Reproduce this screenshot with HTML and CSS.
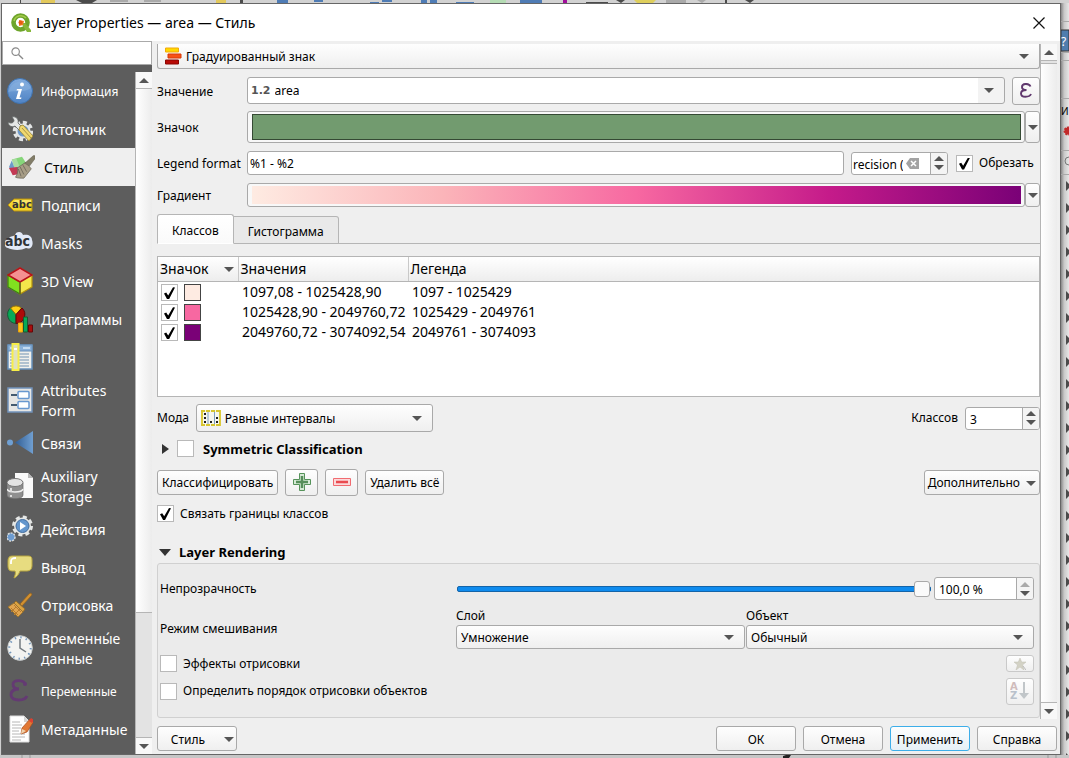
FILE: index.html
```html
<!DOCTYPE html>
<html lang="ru">
<head>
<meta charset="utf-8">
<title>Layer Properties — area — Стиль</title>
<link rel="stylesheet" href="styles.css">
</head>
<body>
<div class="desktop">
  <svg class="toolbar-edge" viewBox="0 0 1069 3" preserveAspectRatio="xMinYMin slice" aria-hidden="true">
    <rect width="1069" height="3" fill="#d2d2d2"/>
    <path d="M41 0h14v3H41zM216 0h10v3h-10z" fill="#e3c95c"/>
    <path d="M277 0h11v3h-11zM314 0h9v2h-9zM370 2h9v1h-9zM382 0h10v2h-10zM421 0h6v3h-6zM430 0h7v3h-7zM456 2h18v1h-18zM520 0h22v3h-22z" fill="#4f7cb5"/>
    <path d="M490 0h16v3h-16z" fill="#b5dcb4"/>
    <path d="M563 0h4v3h-4z" fill="#a10d9b"/>
    <path d="M586 2h22v1h-22zM616 0h9l-4 3zM745 0h9l-4 3zM725 0h2v3h-2zM20 0h1v3h-1zM76 0l6 3h10l5-3M208 0v3M240 0h3v3h-3z" fill="#4b4b4b"/>
    <path d="M634 0h22l-3 3h-16z" fill="#dfcf5d"/>
    <path d="M666 0h20v3h-20zM697 0h9l-4 3zM110 0h18v2h-18zM144 0h17v2h-17z" fill="#aaa"/>
  </svg>

  <section class="dialog" role="dialog" aria-label="Layer Properties — area — Стиль">
    <header class="titlebar">
      <svg class="logo" viewBox="0 0 20 20" aria-hidden="true">
        <circle cx="9.500" cy="9.500" r="7" fill="none" stroke="#6ea52b" stroke-width="4.600"/>
        <path d="M3 8a7 7 0 0 1 12-3" fill="none" stroke="#a7cc4d" stroke-width="1.500"/>
        <path d="M10 10l4 0 6 7v2h-4z" fill="#86b73a"/>
        <path d="M8 7l5 1-1 4-4 1z" fill="#ef7c22"/><circle cx="9.500" cy="9.500" r="2" fill="#e65b13"/>
      </svg>
      <h1 class="title">Layer Properties — area — Стиль</h1>
      <button class="close" type="button" aria-label="Закрыть"><svg viewBox="0 0 12 12"><path d="M0.500.500l11 11M11.500.500l-11 11" stroke="#111" stroke-width="1.200"/></svg></button>
    </header>

    <div class="body">
      <aside class="sidebar">
        <label class="search">
          <svg viewBox="0 0 14 14" aria-hidden="true"><circle cx="5" cy="5" r="4" fill="none" stroke="#888" stroke-width="1.200"/><path d="M8 8l5 5" stroke="#888" stroke-width="1.400"/></svg>
          <input type="text" aria-label="Поиск">
        </label>
        <div class="nav-wrap">
          <nav class="nav">
            <a href="#info" class="item small"><svg viewBox="0 0 26 26"><defs><linearGradient id="gi" x2="0" y2="1"><stop stop-color="#82acdf"/><stop offset="1" stop-color="#4f83c4"/></linearGradient></defs><circle cx="13" cy="13" r="12.500" fill="url(#gi)" stroke="#3f73b0"/><path d="M1.500 14C7 12 18 15 24 10A12 12 0 0 0 1.500 14" fill="#8cb3df" opacity=".5"/><circle cx="15" cy="6.500" r="2" fill="#fff"/><path d="M10 11h5l-2.500 8.500h2l-.5 1.500h-5l2.500-8.500h-2z" fill="#fff"/></svg><span>Информация</span></a>
            <a href="#source" class="item"><svg viewBox="0 0 26 26"><circle cx="16" cy="15" r="8.500" fill="none" stroke="#e3e5e5" stroke-width="3.500" stroke-dasharray="4 2.600"/><circle cx="16" cy="15" r="7.500" fill="#e3e5e5"/><circle cx="16" cy="15" r="5.500" fill="#6e9acb"/><path d="M1 6c3 2 6 1 6-2L5 1c4-1 7 2 6 6l5 5-3 3-5-5C4 12 1 9 1 6z" fill="#e5e7e6" stroke="#5f6464" stroke-width=".8"/><path d="M13 10l3-1 10 11-4 5-10-11z" fill="#f0d86f" stroke="#9b8532" stroke-width=".8"/><path d="M15 12l9 10" stroke="#aa9343"/></svg><span>Источник</span></a>
            <a href="#style" class="item current" aria-current="page"><svg viewBox="0 0 28 26"><path d="M3 5l11-3 6 9-11 4z" fill="#86d67a"/><path d="M3 5l5-1 4 10-6 1z" fill="#a9dca0"/><path d="M3 6l3 8 8-2 2 4-13 2-3-5z" fill="#6b9bc8"/><path d="M0 14l9-1 5 7-10 2z" fill="#c33a54"/><path d="M9 14l9-6 6 7-8 10c-4 0-7 0-9-1 2-3 3-6 2-10z" fill="#a79d86" stroke="#6b6659" stroke-width=".8"/><path d="M17 9l9-8c2-1 3 1 2 3l-6 8z" fill="#827d68" stroke="#66614f" stroke-width=".6"/><path d="M10 15l3 8M12 13l4 8M15 11l4 7" stroke="#706a5d"/></svg><span>Стиль</span></a>
            <a href="#labels" class="item"><svg viewBox="0 0 26 26"><path d="M1 13l6-6h18v12H7z" fill="#f3d62c" stroke="#b68e12"/><path d="M8 8h16v4H6z" fill="#fbe766"/><text x="5" y="16" class="abc-label">abc</text></svg><span>Подписи</span></a>
            <a href="#masks" class="item"><svg class="wide" viewBox="0 0 28 28"><path d="M4 9c3-3 6-1 7-5 3-2 6-1 7 2 5-1 9 1 9 5 2 5-1 10-6 8-5 3-15 2-18 0-5-1-4-9 1-10z" fill="#e2e9f7"/><text x="0" y="17" class="abc-mask">abc</text></svg><span>Masks</span></a>
            <a href="#3d" class="item"><svg viewBox="0 0 26 28"><path d="M13 1l12 7v12l-12 7-12-7V8z" fill="#f4e64b" stroke="#b4920d" stroke-width="1.200"/><path d="M1 8l12 7v12l-12-7z" fill="#81e01f" stroke="#35811a" stroke-width="1.200"/><path d="M13 1l12 7-12 7L1 8z" fill="#f49191" stroke="#b5121b" stroke-width="1.600"/><path d="M13 15v12" stroke="#74621b" stroke-width="1.500"/></svg><span>3D View</span></a>
            <a href="#diagrams" class="item"><svg viewBox="0 0 26 27"><path d="M9 9L4 2a9 9 0 0 0 5 16z" fill="#08a957" stroke="#185a35"/><path d="M9 9L3.500 2.500a9 9 0 0 1 11 0z" fill="#ffd016" stroke="#967409"/><path d="M9 9l6-6.500A9 9 0 0 1 9 18z" fill="#ad0a0a" stroke="#5f0909"/><path d="M11.500 17.500h4v9h-4z" fill="#ffc31b" stroke="#eba30b"/><path d="M16.500 11.500h4v15h-4z" fill="#08a957" stroke="#165b31"/><path d="M21.500 19.500h4v7h-4z" fill="#a80d0d" stroke="#670606"/></svg><span>Диаграммы</span></a>
            <a href="#fields" class="item"><svg viewBox="0 0 26 28"><path d="M1 2h24v24H1z" fill="#f0f0ec" stroke="#6891bb" stroke-width="1.500"/><path d="M1 2h24v6H1z" fill="#8bb2da" stroke="#6891bb"/><path d="M16 4h7v2h-7zM3 4h2v2H3z" fill="#c4dbf1"/><path d="M3 11h19M3 14h19M3 17h19M3 20h19M3 23h19" stroke="#7193b3"/><path d="M5.500 1h6v26h-6z" fill="#dfe1bc" stroke="#f7ee48" stroke-width="2"/><path d="M7 5h3v2H7z" fill="#fff"/></svg><span>Поля</span></a>
            <a href="#form" class="item double"><svg viewBox="0 0 26 26"><path d="M1 1h24v24H1z" fill="#e6e6e4" stroke="#7292ba" stroke-width="1.500"/><path d="M4 8h6M4 18h6" stroke="#445b70" stroke-width="2"/><rect x="11" y="4.500" width="11" height="7" rx="1" fill="#fff" stroke="#6898cf" stroke-width="1.500"/><rect x="11" y="14.500" width="11" height="7" rx="1" fill="#fff" stroke="#6898cf" stroke-width="1.500"/></svg><span>Attributes Form</span></a>
            <a href="#joins" class="item"><svg viewBox="0 0 26 26"><defs><linearGradient id="gj"><stop stop-color="#315e95"/><stop offset="1" stop-color="#709fd1"/></linearGradient></defs><circle cx="3" cy="12.500" r="3" fill="#70a0d3"/><path d="M8 12.500L26 1v23z" fill="url(#gj)"/></svg><span>Связи</span></a>
            <a href="#storage" class="item double"><svg viewBox="0 0 26 28"><path d="M8 1h13l5 5v20H8z" fill="#fafafa"/><path d="M21 1v5h5z" fill="#bbb"/><path d="M0 11v12c0 5 16 5 16 0V11z" fill="#8f8f8f" stroke="#656565" stroke-width=".7"/><ellipse cx="8" cy="10.500" rx="8" ry="4" fill="#e3e3e3" stroke="#777"/><path d="M0 17c1 4 15 4 16 0" fill="none" stroke="#eee" stroke-width="1.500"/><path d="M4 16v4M4 23v2" stroke="#ddd" stroke-width="2"/></svg><span>Auxiliary Storage</span></a>
            <a href="#actions" class="item"><svg viewBox="0 0 26 28"><circle cx="15.500" cy="11" r="9" fill="none" stroke="#e5e7e6" stroke-width="3" stroke-dasharray="4 3.070"/><circle cx="15.500" cy="11" r="8.500" fill="#e5e7e6"/><circle cx="15.500" cy="11" r="6.500" fill="#6396cd" stroke="#426d9f"/><path d="M13 7v8l6-4z" fill="#fff"/><circle cx="4" cy="22" r="4" fill="#6c9bd0" stroke="#d7dada" stroke-width="1.500" stroke-dasharray="2 1"/></svg><span>Действия</span></a>
            <a href="#display" class="item"><svg viewBox="0 0 26 26"><path d="M5 2h16c3 0 4 1 4 4v6c0 3-2 5-5 5h-7c-1 3-3 6-6 7 1-3 2-5 1-7H5c-3 0-4-2-4-5V7c0-3 1-5 4-5z" fill="#e7dc80" stroke="#b7a540"/><path d="M4 10V8c0-3 1-4 5-4" fill="none" stroke="#fff" stroke-width="1.800"/></svg><span>Вывод</span></a>
            <a href="#rendering" class="item"><svg viewBox="0 0 26 26"><path d="M13 12L22 2c2-2 4 0 2 2l-9 10z" fill="#d19031" stroke="#92601d" stroke-width=".7"/><path d="M9 9l9 8-2 3-9-9z" fill="#dba240" stroke="#926b2b"/><path d="M7 11l9 9-5 5L1 15z" fill="#e1a54f" stroke="#997432"/><path d="M4 16l7 7M7 13l7 7M4 20l5-5M7 23l6-6" stroke="#b87c2f"/></svg><span>Отрисовка</span></a>
            <a href="#temporal" class="item double"><svg viewBox="0 0 26 26"><circle cx="13" cy="13" r="12.300" fill="#f3f3f1" stroke="#cbd0d1"/><circle cx="13" cy="13" r="10.700" fill="none" stroke="#7497bc" stroke-width="2" stroke-dasharray="1.400 4.200"/><path d="M13 4v9l6 4" fill="none" stroke="#747b80" stroke-width="1.500"/></svg><span>Временны́е данные</span></a>
            <a href="#variables" class="item small"><svg viewBox="0 0 26 26"><path d="M18 6c-1-4-11-5-12 0 0 3 2 5 6 5-5 0-8 2-8 6 1 7 14 6 16 1" fill="none" stroke="#643a73" stroke-width="2.800"/><circle cx="18" cy="6" r="2" fill="#643a73"/></svg><span>Переменные</span></a>
            <a href="#metadata" class="item"><svg viewBox="0 0 26 28"><path d="M3 1h14l5 5v21H3z" fill="#fff" stroke="#ddd"/><path d="M17 1v6h5z" fill="#d4d4d4"/><path d="M5 7h8M5 10h10M5 13h9M5 16h7M5 19h13M5 22h13M5 25h9" stroke="#b6b6b6"/><path d="M15 13l8-9 4 2-7 11-6 2z" fill="#e17835" stroke="#a94c1b" stroke-width=".7"/><path d="M22 6l2-3 3 2-2 3z" fill="#db4132"/><path d="M14 19l1-5 4 2z" fill="#efd2ad"/></svg><span>Метаданные</span></a>
          </nav>
          <div class="scroll nav-scroll" aria-hidden="true"><i class="cap up"></i><i class="thumb"></i><i class="rest"></i><i class="cap down"></i></div>
        </div>
      </aside>

      <main class="content">
        <div class="viewport">
          <form class="form" id="styleform">
            <div class="combo renderer">
              <svg viewBox="0 0 18 18" aria-hidden="true"><path d="M1.500 1h13v4h-13z" fill="#ffd900" stroke="#f3aa0b"/><path d="M4 7h13v4H4z" fill="#f75216" stroke="#d83a06"/><path d="M1.500 13h13v4h-13z" fill="#b90b06" stroke="#8c0702"/></svg>
              <select aria-label="Тип знака"><option>Градуированный знак</option></select>
            </div>

            <div class="line value-line">
              <label class="name" for="value">Значение</label>
              <div class="combo field"><b class="type">1.2</b><select id="value"><option>area</option></select></div>
              <button class="btn eps" type="button" aria-label="Выражение"><svg viewBox="0 0 12 15"><path d="M10.500 3.500C9 0 2 0 2 4c0 2 2 3 4.500 3C3 7 1 8.500 1 10.500 1 15 9.500 14.500 11 11" fill="none" stroke="#60386e" stroke-width="1.900"/></svg></button>
            </div>

            <div class="line tall">
              <span class="name">Значок</span>
              <button class="swatch symbol" type="button" aria-label="Значок"><i></i></button>
              <button class="drop" type="button" aria-label="Меню значка"></button>
            </div>

            <div class="line">
              <label class="name" for="legend">Legend format</label>
              <input class="text" id="legend" type="text" value="%1 - %2">
              <div class="spin precision"><input type="text" aria-label="Precision" value="recision (">
                <button class="clear" type="button" aria-label="Очистить"><svg viewBox="0 0 13 11"><path d="M0 5.500L4 0h9v11H4z" fill="#a3a3a3"/><path d="M5 3l5 5M10 3L5 8" stroke="#fff" stroke-width="1.500"/></svg></button>
                <span class="steps"><button type="button" aria-label="Больше"></button><button type="button" aria-label="Меньше"></button></span></div>
              <label class="check"><input type="checkbox" checked>Обрезать</label>
            </div>

            <div class="line">
              <span class="name">Градиент</span>
              <button class="swatch ramp" type="button" aria-label="Градиент"><i></i></button>
              <button class="drop" type="button" aria-label="Меню градиента"></button>
            </div>

            <div class="tabs" role="tablist">
              <button class="tab on" type="button" role="tab" aria-selected="true">Классов</button>
              <button class="tab" type="button" role="tab">Гистограмма</button>
            </div>

            <div class="tree">
              <table>
                <thead><tr><th class="c1">Значок<i class="sort"></i></th><th class="c2">Значения</th><th>Легенда</th></tr></thead>
                <tbody>
                  <tr><td><input type="checkbox" checked aria-label="Класс 1"><i class="chip pale"></i></td><td>1097,08 - 1025428,90</td><td>1097 - 1025429</td></tr>
                  <tr><td><input type="checkbox" checked aria-label="Класс 2"><i class="chip pink"></i></td><td>1025428,90 - 2049760,72</td><td>1025429 - 2049761</td></tr>
                  <tr><td><input type="checkbox" checked aria-label="Класс 3"><i class="chip plum"></i></td><td>2049760,72 - 3074092,54</td><td>2049761 - 3074093</td></tr>
                </tbody>
              </table>
            </div>

            <div class="mode">
              <label for="mode">Мода</label>
              <div class="combo mode-combo">
                <svg viewBox="0 0 20 16" aria-hidden="true"><path d="M0 0h20v16H0z" fill="#f7f7ee"/><path d="M7 0v16M13.500 0v16" stroke="#7ea0c4"/><path d="M1 0v16M19 0v16" stroke="#dccb3c" stroke-width="2"/><path d="M0 1h20M0 15h20" stroke="#d7c52f" stroke-width="2" stroke-dasharray="4 1"/><path d="M3 3h2v2H3zM3 7h2v2H3zM3 11h2v2H3zM9 11h2v2H9zM15 7h2v2h-2zM15 11h2v2h-2z" fill="#222"/></svg>
                <select id="mode"><option>Равные интервалы</option></select>
              </div>
              <label class="push" for="classes">Классов</label>
              <div class="spin classes"><input id="classes" type="text" value="3"><span class="steps"><button type="button" aria-label="Больше"></button><button type="button" aria-label="Меньше"></button></span></div>
            </div>

            <div class="group-title symmetric"><i class="fold"></i><label class="check"><input type="checkbox">Symmetric Classification</label></div>

            <div class="actions">
              <button class="btn" type="button">Классифицировать</button>
              <button class="btn icon" type="button" aria-label="Добавить класс"><svg viewBox="0 0 18 18"><path d="M6.500.500h5v6h6v5h-6v6h-5v-6h-6v-5h6z" fill="#d5e9d5" stroke="#56935a"/><path d="M9 3v12M3 9h12" stroke="#568e5a" stroke-width="2.500"/></svg></button>
              <button class="btn icon" type="button" aria-label="Удалить класс"><svg viewBox="0 0 18 18"><path d="M.500 5.500h17v7H.500z" fill="#fbd9da" stroke="#f16b70"/><path d="M3 9h12" stroke="#e94b50" stroke-width="2.500"/></svg></button>
              <button class="btn" type="button">Удалить всё</button>
              <button class="btn menu push" type="button">Дополнительно<i class="tri"></i></button>
            </div>

            <label class="check link"><input type="checkbox" checked>Связать границы классов</label>

            <div class="group-title rendering"><i class="fold open"></i>Layer Rendering</div>
            <div class="group">
              <div class="opacity">
                <label for="opacity">Непрозрачность</label>
                <input class="slider" id="opacity" type="range" value="100">
                <div class="spin percent"><input type="text" aria-label="Непрозрачность, проценты" value="100,0 %"><span class="steps"><button type="button" disabled aria-label="Больше"></button><button type="button" aria-label="Меньше"></button></span></div>
              </div>
              <div class="blend">
                <span>Режим смешивания</span>
                <div><label for="layer">Слой</label><div class="combo"><select id="layer"><option>Умножение</option></select></div></div>
                <div><label for="object">Объект</label><div class="combo"><select id="object"><option>Обычный</option></select></div></div>
              </div>
              <div class="option"><label class="check"><input type="checkbox">Эффекты отрисовки</label>
                <button class="btn off" type="button" disabled aria-label="Настроить эффекты"><svg viewBox="0 0 12 12"><path d="M6 0l1.700 4H12L8.500 7l1.500 5-4-3-4 3 1.500-5L0 4h4.300z" fill="#d3d2c5" stroke="#c2c1b4" stroke-width=".5"/><path d="M9 8l3 4" stroke="#bbb"/></svg></button></div>
              <div class="option order"><label class="check"><input type="checkbox">Определить порядок отрисовки объектов</label>
                <button class="btn off" type="button" disabled aria-label="Порядок отрисовки"><svg viewBox="0 0 20 20"><text x="0" y="9" class="az-a">A</text><text x="0" y="18" class="az-z">Z</text><path d="M14 1v13" stroke="#c1c6c9" stroke-width="2"/><path d="M9 12h10l-5 6z" fill="#c1c6c9"/></svg></button></div>
            </div>
          </form>
          <div class="scroll main-scroll" aria-hidden="true"><i class="cap up"></i><i class="rest"></i><i class="thumb"></i><i class="cap down"></i></div>
        </div>

        <footer class="footer">
          <button class="btn menu style-menu" type="button">Стиль<i class="tri"></i></button>
          <button class="btn push" type="button">ОК</button>
          <button class="btn" type="button">Отмена</button>
          <button class="btn primary" type="submit" form="styleform">Применить</button>
          <button class="btn" type="button">Справка</button>
        </footer>
      </main>
    </div>
  </section>

  <svg class="panel-edge" viewBox="0 0 8 755" preserveAspectRatio="xMinYMin slice" aria-hidden="true">
    <defs>
      <linearGradient id="shade"><stop stop-color="#888"/><stop offset=".4" stop-color="#c9c9c9"/><stop offset="1" stop-color="#e6e6e6"/></linearGradient>
      <pattern id="arrows" width="8" height="22" patternUnits="userSpaceOnUse" y="172"><path d="M5 6l5 5-5 5z" fill="#4b4b4b"/></pattern>
    </defs>
    <rect width="8" height="755" fill="url(#shade)"/>
    <path d="M0 18.500h8M0 49.500h8M0 57.500h8M0 95.500h8M0 147.500h8M0 171.500h8" stroke="#a9a9a9"/>
    <path d="M0 27h8v21H0z" fill="#4f7dae" stroke="#333"/>
    <text x="0" y="43" class="edge-help">?</text>
    <text x="0" y="112" class="edge-text">И</text>
    <circle cx="7" cy="128" r="3.500" fill="#c22a2a" stroke="#c22a2a" stroke-width="2" stroke-dasharray="2 1"/>
    <circle cx="8" cy="158" r="4" fill="none" stroke="#777"/>
    <rect y="172" width="8" height="583" fill="url(#arrows)"/>
  </svg>
  <svg class="bottom-edge" viewBox="0 0 1069 3" preserveAspectRatio="xMinYMin slice" aria-hidden="true"><rect width="1069" height="3" fill="#c6c6c6"/><path d="M783 1l3-1h5l-2 3h-6z" fill="#222"/><path d="M22 0v3M30 0v3M1048 0v3M1056 0v3" stroke="#999"/></svg>
</div>
</body>
</html>
```
FILE: styles.css
```css
* { box-sizing: border-box; }

body {
  margin: 0;
  background: #cfcfcf;
  color: #000;
  font: 12px/16px "Noto Sans", "Open Sans", sans-serif;
}

button, input, select { font: inherit; color: inherit; margin: 0; }
button { cursor: default; }
i { font-style: normal; }
svg { display: block; flex: none; }

.desktop {
  display: grid;
  grid-template: 3px minmax(0, 1fr) 3px / 1px minmax(0, 1fr) 8px;
  height: 100vh;
  overflow: hidden;
}
.toolbar-edge, .bottom-edge { grid-column: 1 / -1; width: 100%; height: 3px; }
.panel-edge { grid-column: 3; grid-row: 2; width: 8px; height: 100%; }

.dialog {
  grid-column: 2;
  display: flex;
  flex-direction: column;
  min-height: 0;
  border: 1px solid #666;
  background: #efefef;
}

.titlebar {
  display: flex;
  align-items: center;
  flex: none;
  height: 37px;
  padding: 0 14px 0 9px;
  background: #fff;
}
.logo { width: 20px; height: 20px; }
.title { flex: 1; margin: 0 0 0 5px; font-size: 14px; font-weight: 400; line-height: 20px; }
.close { width: 14px; height: 14px; padding: 1px; border: 0; background: none; }

.body { display: flex; flex: 1; min-height: 0; }

/* Sidebar */
.sidebar { display: flex; flex-direction: column; flex: none; width: 150px; background: #5d5d5d; }
.search {
  display: flex;
  align-items: center;
  flex: none;
  height: 24px;
  padding-left: 8px;
  background: #fff;
  border: 1px solid #aaa;
}
.search svg { width: 13px; height: 13px; }
.search input { flex: 1; min-width: 0; border: 0; outline: 0; background: none; }
.nav-wrap { display: flex; flex: 1; min-height: 0; margin-top: 7px; }
.nav { flex: 1; overflow: hidden; }
.item {
  display: flex;
  align-items: center;
  gap: 8px;
  height: 38px;
  padding-left: 5px;
  color: #fff;
  font-size: 14px;
  line-height: 20px;
  text-decoration: none;
}
.item svg { width: 26px; height: 28px; }
.item svg.wide { width: 28px; margin: 0 0 0 -2px; }
.item span { width: 92px; padding-top: 2px; }
.item.small { font-size: 12px; }
.item.double { height: 48px; }
.item.current { gap: 9px; padding-left: 7px; background: #efefef; color: #000; }
.abc-label { font: bold 10px "DejaVu Sans", sans-serif; fill: #333; }
.abc-mask { font: bold 14px "DejaVu Sans Condensed", "DejaVu Sans", sans-serif; fill: #2f3338; }

/* Scroll bars */
.scroll { display: flex; flex-direction: column; flex: none; width: 17px; border-left: 1px solid #b5b5b5; background: #e3e3e3; }
.scroll i { display: block; }
.scroll .cap { display: flex; align-items: center; justify-content: center; height: 17px; background: #f8f8f8; border: solid #b5b5b5; border-width: 0 0 1px; }
.scroll .cap.down { border-width: 1px 0 0; }
.cap::before { content: ""; border: 5px solid transparent; border-top-width: 0; border-bottom-color: #555; }
.cap.down::before { border-width: 5px 5px 0; border-top-color: #555; }
.thumb { background: linear-gradient(90deg, #fff, #ececec); }
.nav-scroll .thumb { flex: 525; border-bottom: 1px solid #b5b5b5; }
.nav-scroll .rest { flex: 124; }
.main-scroll .rest { height: 3px; border-bottom: 1px solid #b5b5b5; }
.main-scroll .thumb { flex: 1; }

/* Content column */
.content { display: flex; flex-direction: column; flex: 1; min-width: 0; padding: 3px 3px 3px 5px; }
.viewport { display: flex; flex: 1; min-height: 0; }
.form { flex: 1; min-width: 0; overflow: hidden; }

.combo {
  position: relative;
  display: flex;
  align-items: center;
  height: 24px;
  border: 1px solid #a9a9a9;
  border-radius: 3px;
  background: linear-gradient(#fefefe, #efefef);
}
.combo select {
  flex: 1;
  min-width: 0;
  height: 100%;
  padding: 1px 24px 0 4px;
  border: 0;
  outline: 0;
  background: none;
  appearance: none;
}
.combo::after {
  content: "";
  position: absolute;
  right: 10px;
  border: 5px solid transparent;
  border-bottom: 0;
  border-top-color: #555;
  pointer-events: none;
}
.renderer { height: 25px; border-top: 0; border-radius: 0 0 3px 3px; }
.renderer svg { width: 18px; height: 18px; margin-left: 6px; }

.line { display: flex; align-items: center; height: 24px; margin-top: 8px; }
.line.value-line { height: 27px; }
.line.tall { height: 32px; margin-top: 7px; }
.line .name { flex: none; width: 90px; padding-top: 2px; }
.line .field {
  flex: 1;
  height: 27px;
  margin: 0 7px 0 0;
  background: linear-gradient(90deg, #fff, #fff) left / calc(100% - 26px) 100% no-repeat, #f3f3f3;
}
.type { padding-left: 3px; color: #555; font-family: "DejaVu Sans", sans-serif; font-size: 11px; }

.btn {
  display: flex;
  align-items: center;
  justify-content: center;
  height: 25px;
  padding: 2px 3px 0;
  border: 1px solid #a9a9a9;
  border-radius: 3px;
  background: linear-gradient(#fefefe, #efefef);
}
.btn.eps { width: 28px; height: 28px; padding: 0; }
.eps svg { width: 12px; height: 15px; }

.swatch {
  display: flex;
  flex: 1;
  height: 100%;
  padding: 2px 3px 2px 4px;
  border: 1px solid #a9a9a9;
  border-radius: 3px;
  background: #f8f8f8;
}
.swatch i { flex: 1; height: 100%; }
.symbol i { border: 1px solid #354a34; background: #729b6f; }
.ramp i { background: linear-gradient(90deg, #feebe2, #fbb4b9 25%, #f768a1 50%, #c51b8a 75%, #7a0177); }
.drop {
  display: flex;
  align-items: center;
  justify-content: center;
  width: 15px;
  height: 100%;
  padding: 0;
  border: 1px solid #a9a9a9;
  border-radius: 3px;
  background: linear-gradient(#fefefe, #efefef);
}
.drop::before, .tri, .sort { content: ""; border: 5px solid transparent; border-bottom: 0; border-top-color: #555; }

.text {
  flex: 1;
  min-width: 0;
  height: 24px;
  margin-right: 7px;
  padding: 1px 2px 0;
  border: 1px solid #a9a9a9;
  border-radius: 3px;
  outline: 0;
  background: #fff;
}
.spin { display: flex; align-items: center; flex: none; height: 23px; border: 1px solid #a9a9a9; border-radius: 3px; background: #fff; overflow: hidden; }
.spin input { flex: 1; min-width: 0; height: 100%; padding: 2px 4px 0; border: 0; outline: 0; background: none; }
.steps { display: flex; flex-direction: column; flex: none; width: 17px; height: 100%; border-left: 1px solid #a9a9a9; background: #f4f4f4; }
.steps button { display: flex; flex: 1; justify-content: center; align-items: flex-end; padding: 0 0 2px; border: 0; background: none; }
.steps button + button { align-items: flex-start; padding: 2px 0 0; }
.steps button::before { content: ""; border: 5px solid transparent; border-top: 0; border-bottom-color: #555; }
.steps button + button::before { border-top: 5px solid #555; border-bottom: 0; }
.steps button:disabled::before { border-bottom-color: #aaa; }
.precision { width: 97px; margin-right: 7px; }
.precision input { padding: 2px 0 0; margin-left: 1px; }
.clear { width: 13px; height: 11px; margin: 0 11px 0 3px; padding: 0; border: 0; background: none; }

.check { display: flex; align-items: center; gap: 6px; }
input[type="checkbox"] {
  appearance: none;
  flex: none;
  display: flex;
  width: 17px;
  height: 17px;
  border: 1px solid #b9b9b9;
  background: #fff;
}
input[type="checkbox"]:checked::before {
  content: "";
  width: 11px;
  height: 12px;
  margin: 2px;
  background: #000;
  clip-path: polygon(0 52%, 20% 44%, 38% 68%, 82% 0, 100% 2%, 46% 100%, 28% 100%);
}
.line .check { width: 84px; margin-left: 1px; }

/* Tabs and class list */
.tabs { display: flex; align-items: flex-end; height: 30px; margin-top: 7px; background: linear-gradient(#b5b5b5, #b5b5b5) bottom / 100% 1px no-repeat; }
.tab { height: 28px; padding: 3px 14px 0; border: 1px solid #b5b5b5; border-left: 0; border-radius: 0 3px 0 0; background: #e9e9e9; }
.tab.on { height: 30px; border-left: 1px solid #b5b5b5; border-bottom-color: #fff; border-radius: 3px 3px 0 0; background: linear-gradient(#fff, #fafafa); }
.tree { min-height: 141px; margin-top: 12px; border: 1px solid #b5b5b5; background: #fff; }
table { width: 100%; border-collapse: collapse; table-layout: fixed; font-size: 14px; line-height: 20px; }
th {
  height: 24px;
  padding: 1px 2px 0;
  border-bottom: 1px solid #b5b5b5;
  background: linear-gradient(#fff, #ededed);
  font-weight: 400;
  text-align: left;
}
th + th { border-left: 1px solid #c9c9c9; }
.c1 { width: 80px; }
.c2 { width: 170px; }
.sort { float: right; margin: 8px 2px 0 0; }
td { height: 20px; padding: 0 0 0 4px; white-space: nowrap; }
td:first-child { padding-left: 3px; }
td > * { vertical-align: middle; }
td input[type="checkbox"] { display: inline-flex; }
.chip { display: inline-block; width: 17px; height: 17px; margin-left: 6px; border: 1px solid #444; }
.pale { background: #feebe2; }
.pink { background: #f768a1; }
.plum { background: #7a0177; }

.mode { display: flex; align-items: center; gap: 7px; margin-top: 7px; }
.mode-combo { width: 237px; height: 28px; }
.mode-combo svg { width: 20px; height: 16px; margin-left: 4px; }
.push { margin-left: auto; }
.classes { width: 75px; }

.group-title { display: flex; align-items: center; gap: 8px; font-size: 13px; font-weight: 700; }
.fold { border: 5px solid transparent; border-left: 7px solid #333; border-right: 0; margin-left: 5px; }
.fold.open { border: 6px solid transparent; border-top: 7px solid #333; border-bottom: 0; margin-left: 2px; }
.symmetric { margin-top: 8px; }
.symmetric .check { gap: 9px; }
.actions { display: flex; align-items: center; gap: 7px; height: 28px; margin-top: 11px; }
.actions .btn { padding: 2px 4px 0; }
.actions .btn.icon { width: 33px; height: 27px; padding: 0; }
.actions .menu { padding: 2px 3px 0; }
.icon svg { width: 18px; height: 18px; }
.menu { gap: 6px; }
.link { margin-top: 9px; }
.rendering { margin-top: 22px; }
.group { margin-top: 3px; min-height: 155px; padding: 13px 5px 12px 2px; border: 1px solid #d0d0d0; border-radius: 3px; background: #ebebeb; }

.opacity { display: grid; grid-template-columns: 296px minmax(0, 1fr) 100px; align-items: center; }
.slider { appearance: none; width: calc(100% - 4px); height: 16px; margin: 0 0 0 1px; background: none; }
.slider::-webkit-slider-runnable-track { height: 6px; border: 1px solid #1464a8; border-radius: 2px; background: #0f8bee; }
.slider::-webkit-slider-thumb { appearance: none; width: 16px; height: 16px; margin-top: -6px; border: 1px solid #a9a9a9; border-radius: 3px; background: #fafafa; }
.blend { display: grid; grid-template-columns: 296px 1fr 1fr; align-items: center; column-gap: 0; margin-top: 8px; }
.blend label { display: block; height: 17px; }
.blend > div + div { margin-left: 1px; }
.option { display: flex; justify-content: space-between; align-items: center; height: 17px; margin-top: 6px; }
.order { height: 28px; margin-top: 5px; }
.off { width: 28px; height: 17px; padding: 0; border-color: #c9c9c9; }
.order .off { height: 27px; }
.off svg { width: 12px; height: 12px; }
.order .off svg { width: 20px; height: 20px; }
.az-a { font: bold 10px "DejaVu Sans", sans-serif; fill: #d0bcbc; }
.az-z { font: bold 10px "DejaVu Sans", sans-serif; fill: #b9c1cb; }

.footer { display: flex; gap: 7px; padding-top: 7px; }
.footer .btn { width: 80px; }
.footer .style-menu { gap: 19px; padding-left: 14px; }
.footer .primary { border-color: #3daee9; background: linear-gradient(#fdfefe, #e6f0f6); }

.edge-help { font: 12px "Noto Sans", sans-serif; fill: #fff; }
.edge-text { font: 10px "Noto Sans", sans-serif; fill: #000; }
```
